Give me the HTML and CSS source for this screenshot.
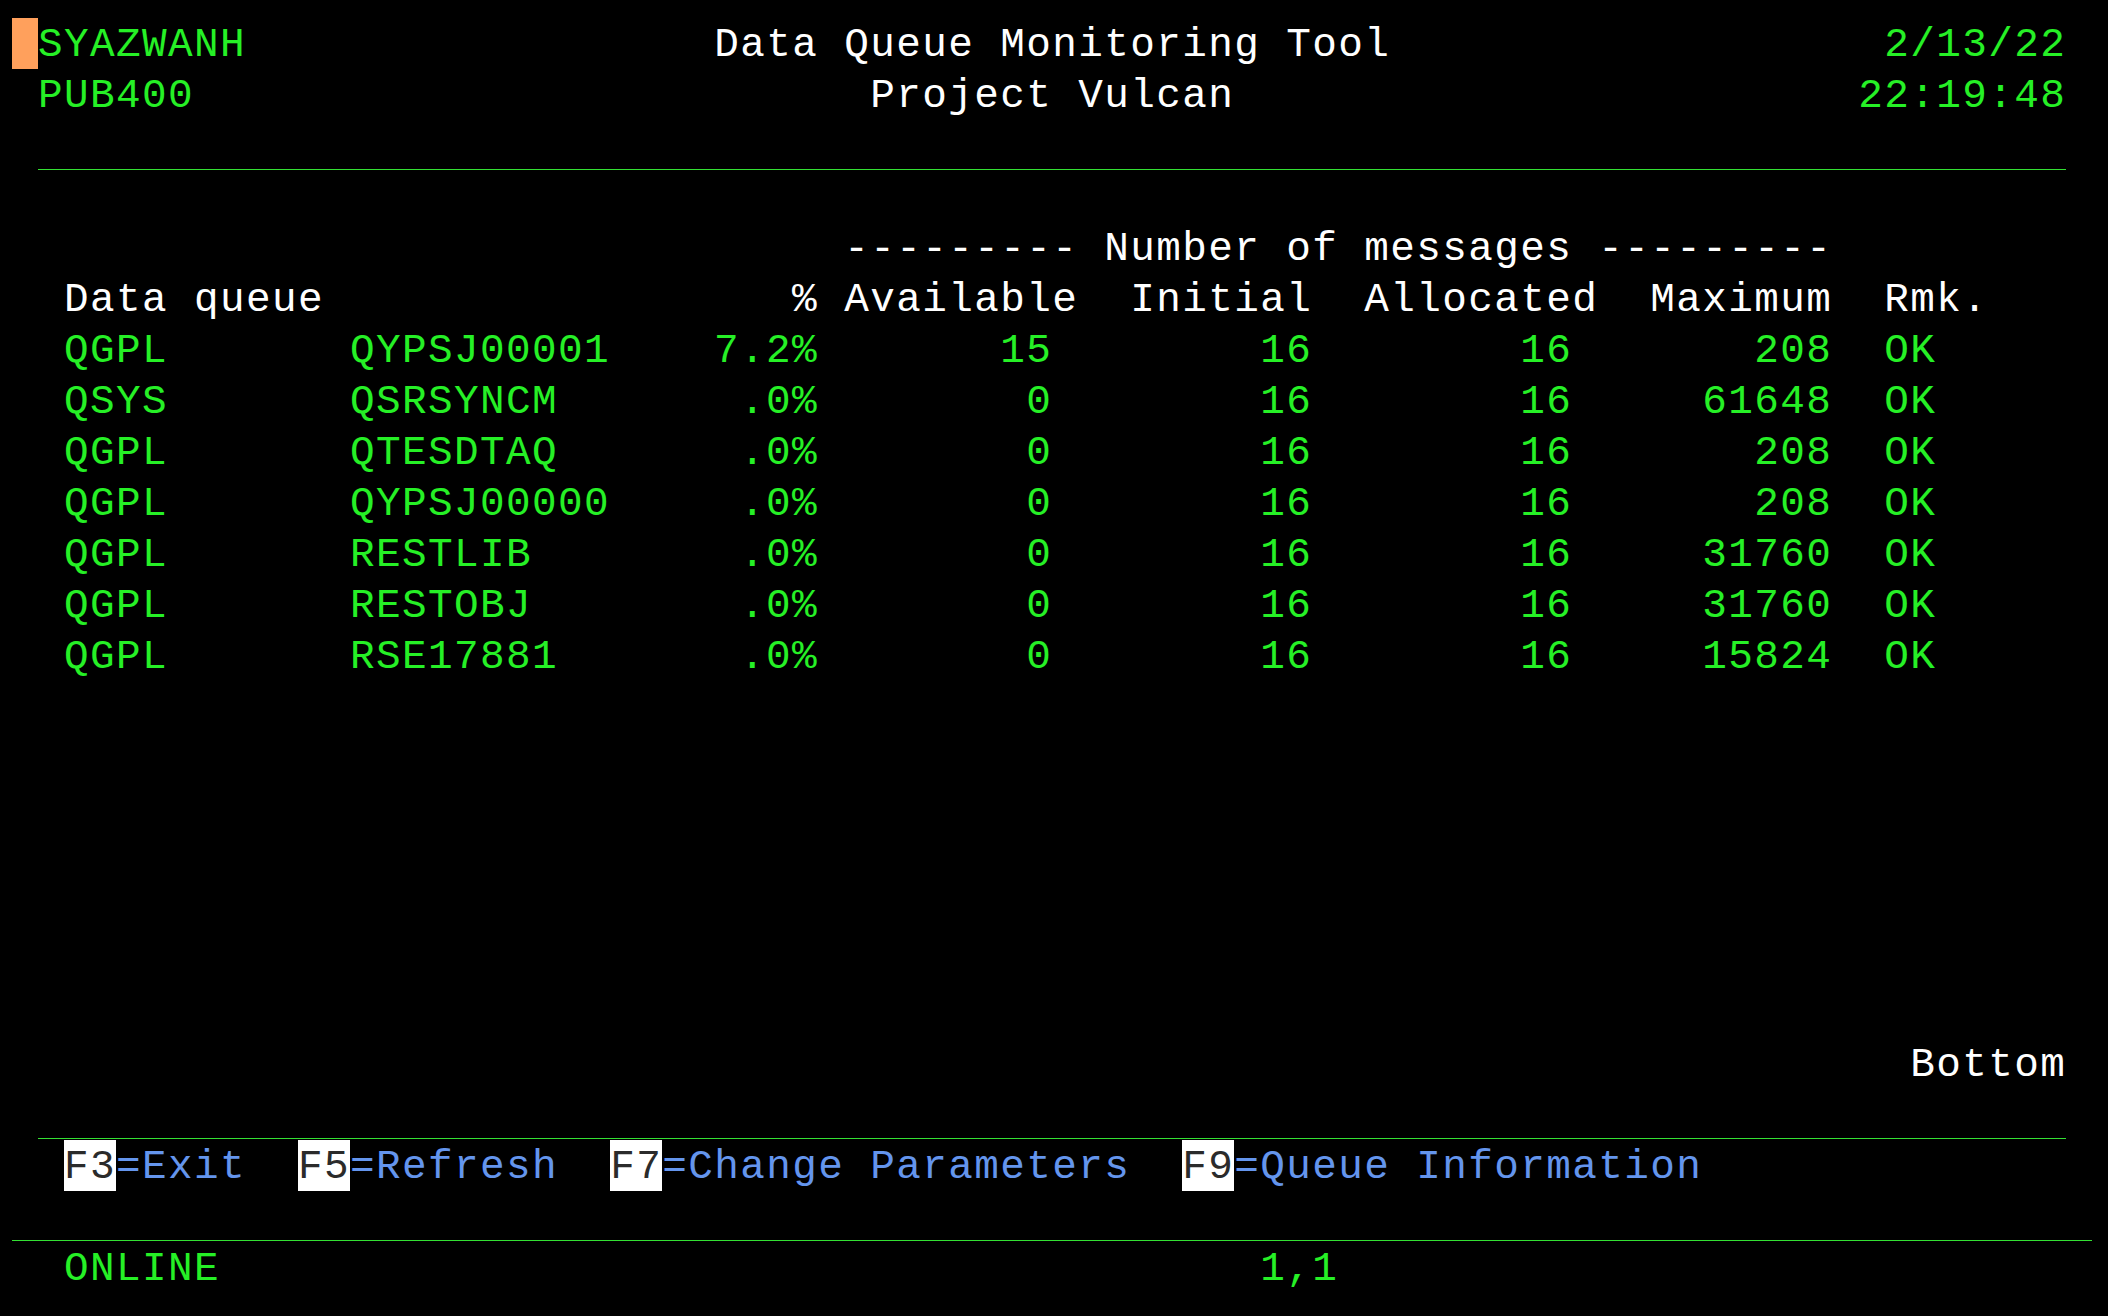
FILE: index.html
```html
<!DOCTYPE html>
<html lang="en">
<head>
<meta charset="utf-8">
<title>Data Queue Monitoring Tool</title>
<link rel="stylesheet" href="styles.css">
</head>
<body>
<main class="screen">
<div class="row"><span class="cursor"> </span><span class="g">SYAZWANH</span>                  <span class="w">Data Queue Monitoring Tool</span>                   <span class="g">2/13/22</span></div>
<div class="row"> <span class="g">PUB400</span>                          <span class="w">Project Vulcan</span>                        <span class="g">22:19:48</span></div>
<div class="row rule-part"></div>
<div class="row"></div>
<div class="row w">                                --------- Number of messages ---------</div>
<div class="row w">  Data queue                  % Available  Initial  Allocated  Maximum  Rmk.</div>
<div class="row g">  QGPL       QYPSJ00001    7.2%       15        16        16       208  OK</div>
<div class="row g">  QSYS       QSRSYNCM       .0%        0        16        16     61648  OK</div>
<div class="row g">  QGPL       QTESDTAQ       .0%        0        16        16       208  OK</div>
<div class="row g">  QGPL       QYPSJ00000     .0%        0        16        16       208  OK</div>
<div class="row g">  QGPL       RESTLIB        .0%        0        16        16     31760  OK</div>
<div class="row g">  QGPL       RESTOBJ        .0%        0        16        16     31760  OK</div>
<div class="row g">  QGPL       RSE17881       .0%        0        16        16     15824  OK</div>
<div class="row"></div>
<div class="row"></div>
<div class="row"></div>
<div class="row"></div>
<div class="row"></div>
<div class="row"></div>
<div class="row"></div>
<div class="row w">                                                                         Bottom</div>
<div class="row rule-part"></div>
<div class="row b">  <span class="fkey">F3</span>=Exit  <span class="fkey">F5</span>=Refresh  <span class="fkey">F7</span>=Change Parameters  <span class="fkey">F9</span>=Queue Information</div>
<div class="row rule-full"></div>
<div class="row g">  ONLINE                                        1,1</div>
</main>
</body>
</html>
```

FILE: styles.css
```css
html, body {
  margin: 0;
  padding: 0;
  background: #000;
}

.screen {
  padding: 18px 0 0 12px;
  font-family: "Liberation Mono", "DejaVu Sans Mono", monospace;
  font-size: 41px;
  letter-spacing: 1.4px;
  color: #26f026;
}

.row {
  height: 51px;
  line-height: 55px;
  white-space: pre;
}

.g { color: #26f026; }
.w { color: #ffffff; }
.b { color: #6495ed; }

.cursor {
  display: inline-block;
  vertical-align: top;
  height: 51px;
  background: #ffa05c;
}

.fkey {
  display: inline-block;
  vertical-align: top;
  height: 51px;
  background: #ffffff;
  color: #2b2b2b;
}

.rule-part {
  background: linear-gradient(#33e033, #33e033) no-repeat;
  background-size: 2028px 1px;
  background-position: 26px 49px;
}

.rule-full {
  background: linear-gradient(#33e033, #33e033) no-repeat;
  background-size: 2080px 1px;
  background-position: 0 49px;
}
```
